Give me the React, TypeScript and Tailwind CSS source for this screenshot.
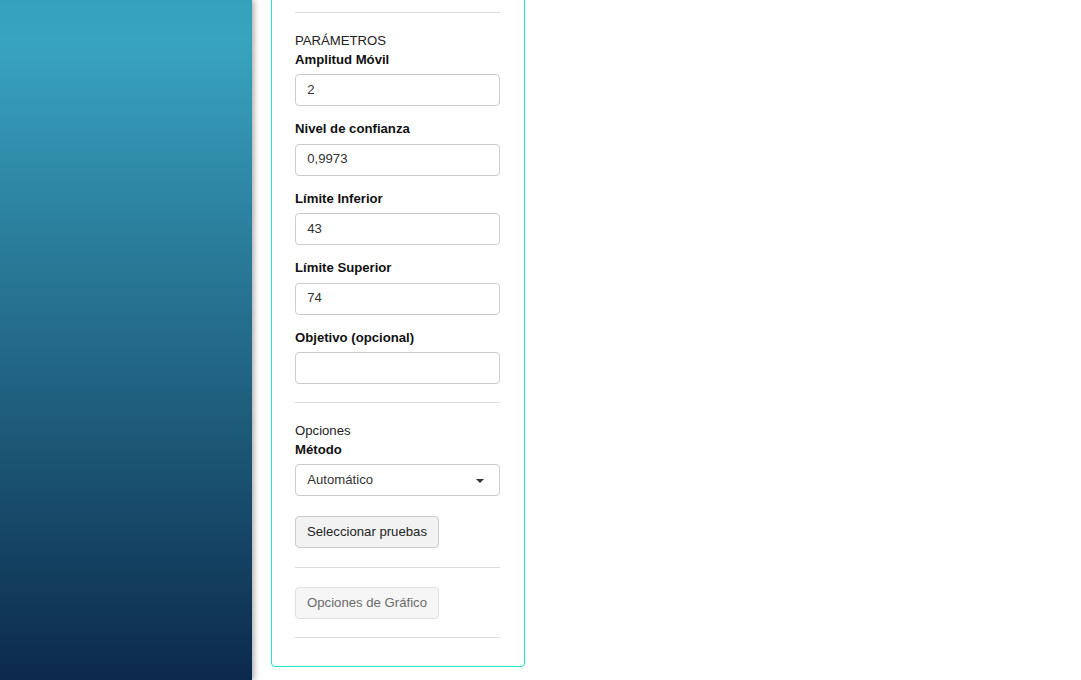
import React from "react";

function Field({ label, value, first }: { label: string; value: string; first?: boolean }) {
  return (
    <div className={first ? "" : "mt-[14.1px]"}>
      <label className="mb-[4.7px] block font-bold leading-[18.8px] text-[#111]">{label}</label>
      <div className="flex h-[31.96px] items-center rounded-[4px] border border-[#cccccc] bg-white pl-[11.28px] text-[#333]">
        {value}
      </div>
    </div>
  );
}

function Hr({ className = "" }: { className?: string }) {
  return <div className={"h-px bg-[#dddddd] " + className} />;
}

export default function App() {
  return (
    <div className="flex h-[680px] w-[1081px] overflow-hidden bg-white font-['Liberation_Sans',Arial,sans-serif] text-[13.16px] leading-[18.8px] text-[#222]">
      <aside className="relative z-10 h-full w-[252px] shrink-0 bg-[linear-gradient(to_bottom,#35a0ba_0px,#38a4c0_40px,#0c2a4b_680px)] shadow-[2px_0_6px_rgba(0,0,0,0.35)]" />
      <main className="pl-[19px]">
        <div className="-mt-[10px] w-[254px] rounded-[4px] border border-[#1de9cf] pb-[28px] pl-[23px] pr-[24px] pt-[21px]">
          <Hr />
          <div className="mt-[18.8px]">PARÁMETROS</div>
          <Field label="Amplitud Móvil" value="2" first />
          <Field label="Nivel de confianza" value="0,9973" />
          <Field label="Límite Inferior" value="43" />
          <Field label="Límite Superior" value="74" />
          <Field label="Objetivo (opcional)" value="" />
          <Hr className="mt-[18px]" />
          <div className="mt-[18.8px]">Opciones</div>
          <label className="mb-[4.7px] block font-bold leading-[18.8px] text-[#111]">Método</label>
          <div className="flex h-[31.96px] items-center justify-between rounded-[4px] border border-[#cccccc] bg-white pl-[11.28px] pr-[15px] text-[#333]">
            <span>Automático</span>
            <svg width="8" height="4" viewBox="0 0 8 4" className="mt-[1px]">
              <polygon points="0,0 8,0 4,4" fill="#333" />
            </svg>
          </div>
          <button className="mt-[20px] flex h-[31.96px] w-[144px] items-center justify-center rounded-[4px] border border-[#cccccc] bg-[#f2f2f2] text-[#222]">
            Seleccionar pruebas
          </button>
          <Hr className="mt-[19px]" />
          <button
            disabled
            className="mt-[19px] flex h-[31.96px] w-[144px] items-center justify-center rounded-[4px] border border-[#e0e0e0] bg-[#f6f6f6] text-[#6a6a6a]"
          >
            Opciones de Gráfico
          </button>
          <Hr className="mt-[18px]" />
        </div>
      </main>
    </div>
  );
}
